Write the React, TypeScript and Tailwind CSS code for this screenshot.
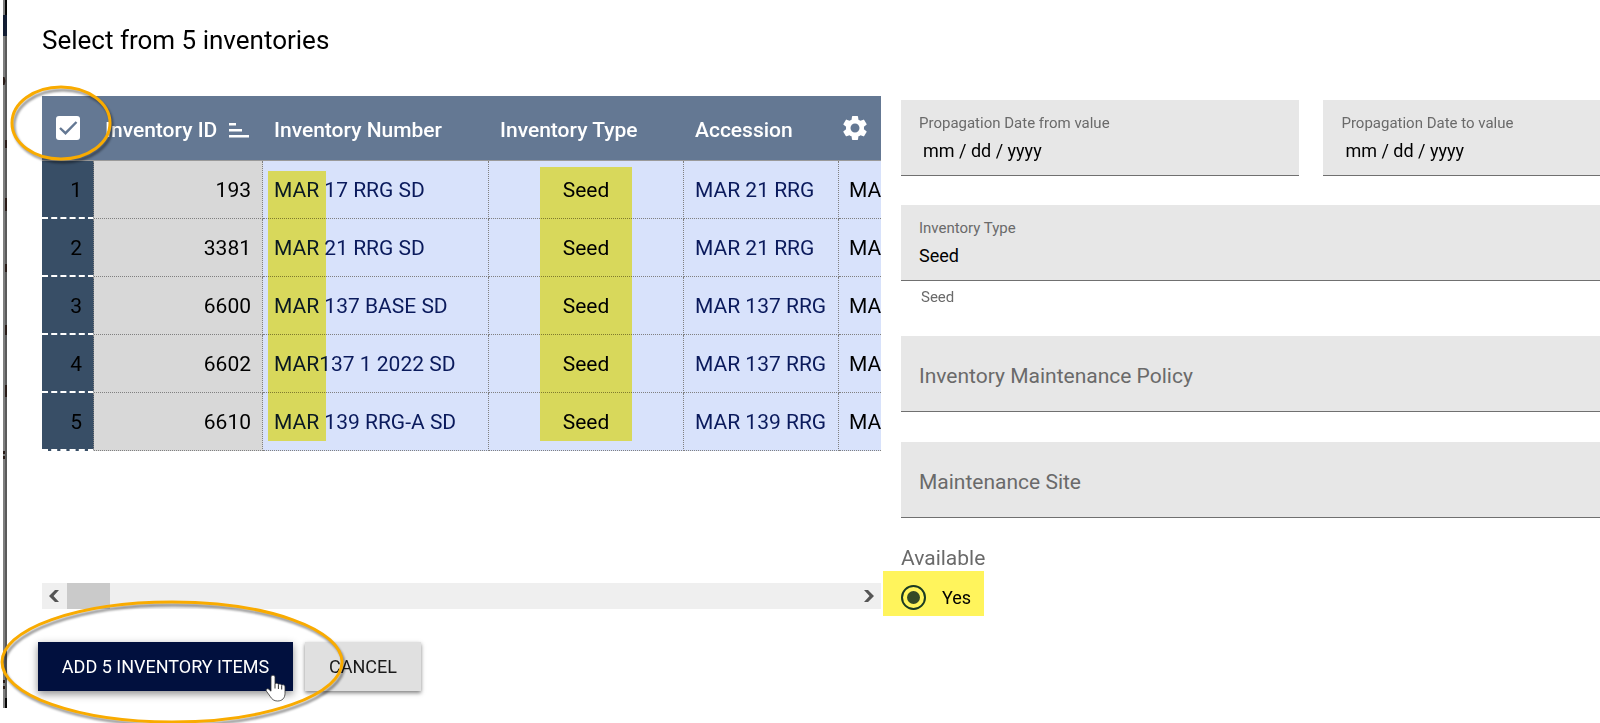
import React from "react";
import { MdSettings } from "react-icons/md";

type Item = { id: number; number: string; type: string; accession: string };

const items: Item[] = [
  { id: 193, number: "MAR 17 RRG SD", type: "Seed", accession: "MAR 21 RRG" },
  { id: 3381, number: "MAR 21 RRG SD", type: "Seed", accession: "MAR 21 RRG" },
  { id: 6600, number: "MAR 137 BASE SD", type: "Seed", accession: "MAR 137 RRG" },
  { id: 6602, number: "MAR137 1 2022 SD", type: "Seed", accession: "MAR 137 RRG" },
  { id: 6610, number: "MAR 139 RRG-A SD", type: "Seed", accession: "MAR 139 RRG" },
];

function SortIcon() {
  return (
    <svg width="20" height="15" viewBox="0 0 20 15" fill="#fff" aria-hidden="true" className="shrink-0">
      <path d="M0 0h7v2.500H0zM0 6h13v2.500H0zM0 12h20v2.500H0z" />
    </svg>
  );
}

function Chevron({ flip = false }: { flip?: boolean }) {
  return (
    <svg width="10" height="12" viewBox="0 0 10 12" fill="#555" aria-hidden="true" className={flip ? "rotate-180" : ""}>
      <path d="M6 0h4L4.500 6 10 12H6L0 6z" />
    </svg>
  );
}

function Ellipse({ rx, ry, className }: { rx: number; ry: number; className: string }) {
  const w = rx * 2 + 12;
  const h = ry * 2 + 12;
  return (
    <svg width={w} height={h} viewBox={`0 0 ${w} ${h}`} fill="none" aria-hidden="true" className={className}>
      <ellipse cx={rx + 3} cy={ry + 3} rx={rx} ry={ry} stroke="#f9ab00" strokeWidth="3" className="drop-shadow-[2px_3px_1px_rgba(0,0,0,0.4)]" />
    </svg>
  );
}

function HandCursor() {
  return (
    <svg width="22" height="28" viewBox="0 0 22 28" aria-hidden="true" className="pointer-events-none absolute top-[32px] right-[6px]">
      <path
        d="M8 1.200c1.200 0 2 .8 2 2V10c.4-1.100 3.200-1 3.400.6.6-1.100 3-.8 3.200.8.8-1 3.400-.7 3.400 1.400v6.500c0 4.500-2.500 7.700-7.500 7.700-3.500 0-5.600-1.700-7.300-4.600L1.300 17c-.9-1.700 1-3 2.500-1.800L6 17.200V3.200c0-1.200.8-2 2-2z"
        fill="#fff"
        stroke="#333"
        strokeWidth="0.8"
      />
      <path d="M10 10v4.500M13.400 11v4M16.700 12v3.500" stroke="#333" strokeWidth="1" />
    </svg>
  );
}

function PageEdge() {
  return (
    <svg width="4" height="708" viewBox="0 0 4 708" aria-hidden="true" className="shrink-0">
      <path d="M0 0h2v708H0z" fill="#7f7f7f" />
      <path d="M2 0h2v708H2z" fill="#5a5a5a" />
      <path d="M2 0h2v15H2zM2 698h2v10H2z" fill="#050505" />
      <path d="M0 15h4v21H0z" fill="#131d33" />
      <path d="M0 77h1.500l1 4-1 4H0zM2 140h2v8H2zM2 198h2v13H2zM2 264h2v8H2zM2 325h2v10H2zM2 385h2v12H2zM0 451h2v3H0zM0 456h2v3H0zM0 680h2v3H0zM0 686h2v3H0z" fill="#2a1c18" />
    </svg>
  );
}

const highlight = "pointer-events-none absolute bg-[#fff45c] mix-blend-multiply";
const th = "h-[65px] border-b border-[#9a9a9a] px-[11px] pt-[5px] text-left font-medium whitespace-nowrap text-white";
const td = "h-[58px] border-b border-dotted border-[#808080] pt-[2px] whitespace-nowrap";
const tdInner = "border-r px-[11px]";

function InventoryTable() {
  return (
    <div className="relative flex h-[513px] w-[839px] shrink-0 flex-col justify-between overflow-hidden">
      <table className="w-full table-fixed border-separate border-spacing-0 text-[21px]">
        <colgroup>
          <col className="w-[52px]" />
          <col className="w-[169px]" />
          <col className="w-[226px]" />
          <col className="w-[195px]" />
          <col className="w-[155px]" />
          <col />
        </colgroup>
        <thead className="bg-[#647893]">
          <tr>
            <th className="h-[65px] border-b border-[#9a9a9a] pl-[14px]">
              <span className="relative block size-6">
                <input type="checkbox" defaultChecked aria-label="Select all" className="block size-6 appearance-none rounded-[3px] bg-white" />
                <svg width="24" height="24" viewBox="0 0 24 24" fill="none" stroke="#647893" strokeWidth="2.4" aria-hidden="true" className="pointer-events-none absolute inset-0">
                  <path d="M4 12l5.500 5.200L20.500 6" />
                </svg>
              </span>
            </th>
            <th className={th}>
              <span className="flex items-center gap-3">
                Inventory ID
                <SortIcon />
              </span>
            </th>
            <th className={th}>Inventory Number</th>
            <th className={th}>Inventory Type</th>
            <th className={th}>Accession</th>
            <th className="border-b border-[#9a9a9a]">
              <button type="button" aria-label="Table settings" className="block pl-px text-[30px] text-white">
                <MdSettings />
              </button>
            </th>
          </tr>
        </thead>
        <tbody className="bg-[#d8e2fb]">
          {items.map((item, i) => (
            <tr key={item.id}>
              <td className="h-[58px] border-r border-b-2 border-r-[#808080] border-b-white bg-[#384e66] pt-[3px] pr-[11px] text-right text-black [border-bottom-style:dashed] [border-right-style:dotted]">
                {i + 1}
              </td>
              <td className={`${td} ${tdInner} bg-[#d8d8d8] text-right`}>{item.id}</td>
              <td className={`${td} ${tdInner} text-[#0a1a5c]`}>{item.number}</td>
              <td className={`${td} ${tdInner} text-center`}>{item.type}</td>
              <td className={`${td} ${tdInner} text-[#0a1a5c]`}>{item.accession}</td>
              <td className={`${td} pl-[10px]`}>MA</td>
            </tr>
          ))}
        </tbody>
      </table>
      <div className={`${highlight} top-[75px] left-[226px] h-[270px] w-[58px]`} />
      <div className={`${highlight} top-[71px] left-[498px] h-[274px] w-[92px]`} />
      <div className="flex h-[26px] items-center bg-[#efefef]">
        <button type="button" aria-label="Scroll left" className="flex w-[25px] justify-center pr-[2px]">
          <Chevron />
        </button>
        <div className="h-full w-[43px] bg-[#cacaca]" />
        <button type="button" aria-label="Scroll right" className="ml-auto flex w-[25px] justify-center">
          <Chevron flip />
        </button>
      </div>
    </div>
  );
}

const fieldBox = "relative h-[76px] border-b border-[#707070] bg-[#e7e7e7]";

function DateField({ id, label, className }: { id: string; label: string; className: string }) {
  return (
    <div className={`${fieldBox} px-[18px] pt-[13px] ${className}`}>
      <label htmlFor={id} className="block text-[15px] leading-5 text-[#6a6a6a]">
        {label}
      </label>
      <input id={id} type="text" placeholder="mm / dd / yyyy" className="mt-1 block h-7 w-full bg-transparent pl-1 text-lg text-black outline-none placeholder:text-black" />
    </div>
  );
}

function EmptySelect({ id, label }: { id: string; label: string }) {
  return (
    <div className={`${fieldBox} flex items-center`}>
      <label htmlFor={id} className="pointer-events-none px-[18px] pt-[6px] text-[21px] text-[#6a6a6a]">
        {label}
      </label>
      <select id={id} defaultValue="" className="h-full flex-1 appearance-none bg-transparent outline-none">
        <option value="" />
      </select>
    </div>
  );
}

function Filters() {
  return (
    <form className="flex min-w-0 flex-1 flex-col pt-1">
      <div className="flex gap-6">
        <DateField id="date-from" label="Propagation Date from value" className="w-[57%] shrink-0" />
        <DateField id="date-to" label="Propagation Date to value" className="flex-1" />
      </div>
      <div className={`${fieldBox} mt-[29px] px-[18px] pt-[13px]`}>
        <label htmlFor="inventory-type" className="block text-[15px] leading-5 text-[#6a6a6a]">
          Inventory Type
        </label>
        <select id="inventory-type" defaultValue="Seed" className="mt-1 block h-7 w-full appearance-none bg-transparent text-lg text-black outline-none">
          <option>Seed</option>
        </select>
      </div>
      <p className="mt-1 mb-[27px] pl-5 text-[15px] leading-6 text-[#6a6a6a]">Seed</p>
      <EmptySelect id="maintenance-policy" label="Inventory Maintenance Policy" />
      <div className="mt-[30px]">
        <EmptySelect id="maintenance-site" label="Maintenance Site" />
      </div>
      <fieldset className="mt-[27px]">
        <legend className="text-[21px] leading-[26px] text-[#6a6a6a]">Available</legend>
        <div className="-ml-[18px] flex h-[45px] w-[101px] items-center gap-4 bg-[#fff45c] pt-2 pl-[18px]">
          <input
            id="available-yes"
            type="radio"
            name="available"
            defaultChecked
            className="relative size-[25px] shrink-0 appearance-none rounded-full border-2 border-[#1a3a22] before:absolute before:inset-1 before:rounded-full before:bg-[#344a26]"
          />
          <label htmlFor="available-yes" className="text-lg text-black">
            Yes
          </label>
        </div>
      </fieldset>
    </form>
  );
}

export default function App() {
  return (
    <div className="relative flex overflow-hidden bg-white pl-[3px] font-[Roboto,sans-serif] text-black">
      <PageEdge />
      <main className="min-w-0 flex-1 pt-5 pb-8 pl-[35px]">
        <h1 className="text-[26px] leading-10">Select from 5 inventories</h1>
        <div className="mt-9 flex gap-5">
          <InventoryTable />
          <Filters />
        </div>
        <div className="-ml-1 flex gap-3 pt-[26px]">
          <button type="button" className="relative h-[49px] w-[255px] bg-[#01103e] text-lg text-white shadow-[0_3px_8px_rgba(0,0,0,0.45)]">
            ADD 5 INVENTORY ITEMS
            <HandCursor />
          </button>
          <button type="button" className="h-[49px] w-[116px] bg-[#e0e0e0] text-lg text-[#1a1a1a] shadow-[0_2px_4px_rgba(0,0,0,0.5)]">
            CANCEL
          </button>
        </div>
      </main>
      <Ellipse rx={49} ry={36} className="pointer-events-none absolute top-[84px] left-[9px]" />
      <Ellipse rx={170} ry={60} className="pointer-events-none absolute top-[599px] left-[-1px]" />
    </div>
  );
}
